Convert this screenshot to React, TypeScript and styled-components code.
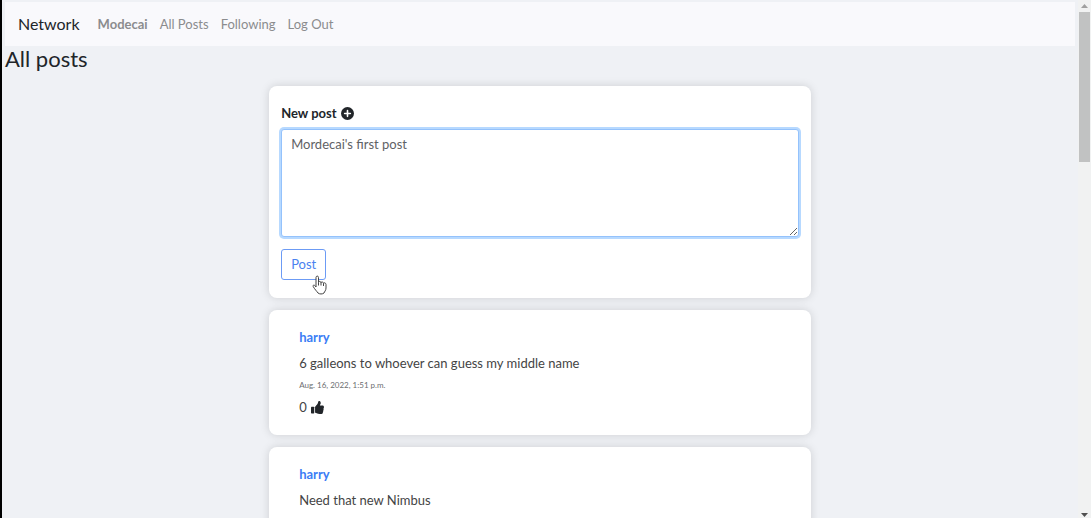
import React, { useState } from "react";
import styled, { createGlobalStyle } from "styled-components";

const GlobalStyle = createGlobalStyle`
  * { box-sizing: border-box; }
  body {
    margin: 0;
    background: #eff1f5;
    color: #212529;
    font: 13px/20px "Trebuchet MS", Lato, sans-serif;
  }
  button, textarea { font: inherit; }
`;

const Frame = styled.div`
  display: flex;
  height: 100vh;
  overflow: hidden;
  border-left: 2px solid #000;
`;

const Page = styled.div`
  flex: 1;
  min-width: 0;
  padding: 2px 3px;
`;

const Navbar = styled.nav`
  display: flex;
  align-items: center;
  gap: 18px;
  height: 44px;
  padding: 0 13px;
  background: #f9f9fc;
`;

const Brand = styled.a`
  color: #212529;
  font-size: 16px;
  text-decoration: none;
`;

const NavLinks = styled.div`
  display: flex;
  gap: 12px;
`;

const NavLink = styled.a<{ $strong?: boolean }>`
  color: #8b8c8e;
  font-weight: ${(p) => (p.$strong ? 700 : 400)};
  text-decoration: none;
`;

const Title = styled.h1`
  margin: 0 0 14px;
  font-size: 22px;
  line-height: 26px;
  font-weight: 400;
`;

const Feed = styled.main`
  display: flex;
  flex-direction: column;
  gap: 12px;
  width: calc(51% - 4px);
  min-width: 300px;
  margin: 0 auto;
`;

const Card = styled.section`
  border-radius: 8px;
  background: #fff;
  box-shadow: 0 0 10px rgba(0, 0, 0, 0.14);
`;

const Composer = styled(Card)`
  padding: 17px 12px 18px;
`;

const Label = styled.label`
  display: flex;
  align-items: center;
  gap: 4px;
  margin-bottom: 6px;
  font-weight: 700;
`;

const PostInput = styled.textarea`
  display: block;
  width: 100%;
  height: 108px;
  padding: 4px 9px;
  border: 1px solid #94c2fc;
  border-radius: 3px;
  outline: 0;
  background: #fff;
  color: #5f6265;
  box-shadow: 0 0 0 2px #b7d9ff;
  resize: vertical;
`;

const ButtonRow = styled.div`
  position: relative;
  display: flex;
  margin-top: 12px;
`;

const PostButton = styled.button`
  height: 31px;
  padding: 0 9px 2px;
  border: 1px solid #6c9bf5;
  border-radius: 3px;
  background: #fff;
  color: #4a82f0;
  cursor: pointer;
`;

const Pointer = styled.svg`
  position: absolute;
  left: 31px;
  top: 26px;
`;

const Post = styled(Card)`
  display: flex;
  flex-direction: column;
  align-items: flex-start;
  min-height: 125px;
  padding: 17px 30px;
`;

const Author = styled.a`
  color: #3b7df5;
  font-weight: 700;
  text-decoration: none;
`;

const Body = styled.p`
  margin: 6px 0 5px;
  color: #444;
`;

const Time = styled.time`
  color: #6c6e70;
  font-size: 8px;
  line-height: 14px;
`;

const LikeButton = styled.button`
  display: flex;
  align-items: center;
  gap: 4px;
  margin-top: 5px;
  padding: 0;
  border: 0;
  background: none;
  color: #444;
`;

const ScrollTrack = styled.div`
  display: flex;
  flex-direction: column;
  width: 13px;
  background: #f1f2f2;
`;

const ScrollArrow = styled.svg`
  display: block;
  flex: none;
`;

const ScrollSpace = styled.div`
  flex: 1;
  padding: 0 1px;
`;

const ScrollThumb = styled.div`
  height: 30%;
  background: #c1c2c2;
`;

type PostData = { author: string; body: string; time?: string; likes?: number };

const posts: PostData[] = [
  { author: "harry", body: "6 galleons to whoever can guess my middle name", time: "Aug. 16, 2022, 1:51 p.m.", likes: 0 },
  { author: "harry", body: "Need that new Nimbus" },
];

const PlusIcon = () => (
  <svg width="13" height="13" viewBox="0 0 16 16" aria-hidden="true">
    <circle cx="8" cy="8" r="8" fill="#212529" />
    <path d="M8 4.5v7M4.5 8h7" stroke="#fff" strokeWidth="2" strokeLinecap="round" />
  </svg>
);

const ThumbIcon = () => (
  <svg width="13" height="13" viewBox="0 0 512 512" fill="#212529" aria-hidden="true">
    <path d="M104 224H24c-13.255 0-24 10.745-24 24v216c0 13.255 10.745 24 24 24h80c13.255 0 24-10.745 24-24V248c0-13.255-10.745-24-24-24z" />
    <path d="M384 81.452c0 42.416-25.97 66.208-33.277 94.548h101.723c33.397 0 59.397 27.746 59.553 58.098.084 17.938-7.546 37.249-19.439 49.197l-.11.11c9.836 23.337 8.237 56.037-9.308 79.469 8.681 25.895-.069 57.704-16.382 74.757 4.298 17.598 2.244 32.575-6.148 44.632C440.202 511.587 389.616 512 346.839 512l-2.845-.001c-48.287-.017-87.806-17.598-119.56-31.725-15.957-7.099-36.821-15.887-52.651-16.178-6.54-.12-11.783-5.457-11.783-11.998v-213.77c0-3.2 1.282-6.271 3.558-8.521 39.614-39.144 56.648-80.587 89.117-113.111 14.804-14.832 20.188-37.236 25.393-58.902C282.515 39.293 291.817 0 312 0c24 0 72 8 72 81.452z" />
  </svg>
);

export default function App() {
  const [draft, setDraft] = useState("Mordecai's first post");
  return (
    <>
      <GlobalStyle />
      <Frame>
        <Page>
          <Navbar>
            <Brand href="#">Network</Brand>
            <NavLinks>
              <NavLink href="#" $strong>Modecai</NavLink>
              <NavLink href="#">All Posts</NavLink>
              <NavLink href="#">Following</NavLink>
              <NavLink href="#">Log Out</NavLink>
            </NavLinks>
          </Navbar>
          <Title>All posts</Title>
          <Feed>
            <Composer>
              <Label htmlFor="new-post">New post <PlusIcon /></Label>
              <PostInput id="new-post" spellCheck={false} value={draft} onChange={(e) => setDraft(e.target.value)} />
              <ButtonRow>
                <PostButton type="button">Post</PostButton>
                <Pointer width="15" height="20" viewBox="0 0 15 20" aria-hidden="true">
                  <path
                    d="M4 12V2.5C4 .6 6.5 .6 6.5 2.5V7.5C6.5 6 9 6 9 7.8C9 6.5 11.5 6.7 11.5 8.5C11.5 7.3 14 7.6 14 9.5V13C14 15.5 12.5 16.5 12 18C10.500 19.300 7.500 19.300 6 18C5 16.5 2.5 14 1.2 11.5C.5 10 2.500 9.200 4 12Z"
                    fill="#fff" stroke="#444" strokeWidth="1" strokeLinejoin="round"
                  />
                  <path d="M6.5 7.5V10.5M9 7.8V10.5M11.5 8.5V11" stroke="#444" fill="none" />
                </Pointer>
              </ButtonRow>
            </Composer>
            {posts.map((post) => (
              <Post key={post.body}>
                <Author href="#">{post.author}</Author>
                <Body>{post.body}</Body>
                {post.time && <Time>{post.time}</Time>}
                {post.likes !== undefined && (
                  <LikeButton type="button" aria-label="Like">{post.likes} <ThumbIcon /></LikeButton>
                )}
              </Post>
            ))}
          </Feed>
        </Page>
        <ScrollTrack aria-hidden="true">
          <ScrollArrow width="13" height="12" viewBox="0 0 13 12"><path d="M3 8L6.500 4L10 8Z" fill="#a0a0a0" /></ScrollArrow>
          <ScrollSpace><ScrollThumb /></ScrollSpace>
          <ScrollArrow width="13" height="6" viewBox="0 0 13 6"><path d="M3 1H10L6.500 5Z" fill="#505050" /></ScrollArrow>
        </ScrollTrack>
      </Frame>
    </>
  );
}
